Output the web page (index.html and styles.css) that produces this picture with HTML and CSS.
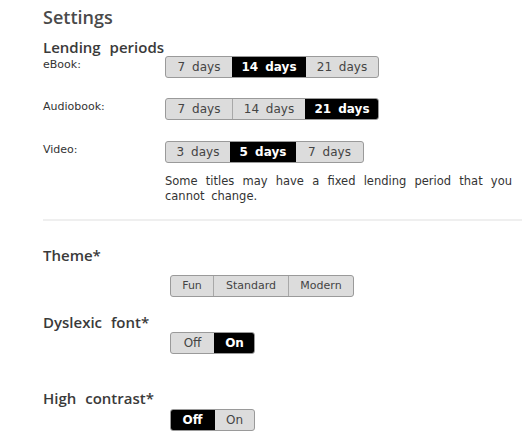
FILE: index.html
```html
<!DOCTYPE html>
<html>
<head>
<meta charset="utf-8">
<link rel="stylesheet" href="styles.css">
</head>
<body>
<div class="page">
  <h1 class="title">Settings</h1>
  <h2 class="section">Lending periods</h2>
  <div class="row row-first">
    <div class="label">eBook:</div>
    <div class="seg">
      <span class="opt w66">7 days</span><span class="opt on w73">14 days</span><span class="opt w73">21 days</span>
    </div>
  </div>
  <div class="row">
    <div class="label">Audiobook:</div>
    <div class="seg">
      <span class="opt w66">7 days</span><span class="opt w73">14 days</span><span class="opt on w73">21 days</span>
    </div>
  </div>
  <div class="row row-video">
    <div class="label">Video:</div>
    <div class="col">
      <div class="seg">
        <span class="opt w64">3 days</span><span class="opt on w65">5 days</span><span class="opt w69">7 days</span>
      </div>
      <p class="note">Some titles may have a fixed lending period that you cannot change.</p>
    </div>
  </div>
  <hr class="divider">
  <h2 class="section s-theme">Theme*</h2>
  <div class="seg seg-b">
    <span class="opt light w42">Fun</span><span class="opt light w75">Standard</span><span class="opt light w65">Modern</span>
  </div>
  <h2 class="section s-dys">Dyslexic font*</h2>
  <div class="seg seg-b">
    <span class="opt w44">Off</span><span class="opt on w40">On</span>
  </div>
  <h2 class="section s-hc">High contrast*</h2>
  <div class="seg seg-b">
    <span class="opt on w44">Off</span><span class="opt w40">On</span>
  </div>
</div>
</body>
</html>
```
FILE: styles.css
```css
html, body {
  margin: 0;
  padding: 0;
  background: #fff;
}
body {
  font-family: "DejaVu Sans", "Open Sans", sans-serif;
  color: #333;
}
.page {
  padding: 6px 7px 0 43px;
}
.title {
  margin: 0;
  font-family: "Open Sans", "DejaVu Sans", sans-serif;
  font-size: 18px;
  font-weight: 600;
  color: #4a4a4a;
  line-height: 22px;
}
.section {
  margin: 0;
  font-family: "Open Sans", "DejaVu Sans", sans-serif;
  font-size: 15px;
  font-weight: 600;
  color: #3a3a3a;
  line-height: 20px;
  word-spacing: 5px;
}
.title + .section {
  margin-top: 9px;
}
.row {
  display: grid;
  grid-template-columns: 122px auto;
  margin-top: 20px;
}
.row-first {
  margin-top: -1px;
}
.row-video {
  margin-top: 21px;
}
.label {
  font-size: 11px;
  color: #333;
  line-height: 14px;
  padding-top: 2px;
}
.col {
  display: flex;
  flex-direction: column;
}
.seg {
  display: flex;
  width: max-content;
  border: 1px solid #9a9a9a;
  border-radius: 3px;
  overflow: hidden;
  background: #dcdcdc;
}
.opt {
  display: block;
  height: 20px;
  line-height: 20px;
  text-align: center;
  font-size: 12px;
  color: #444;
  word-spacing: 3px;
  border-left: 1px solid #a8a8a8;
  box-sizing: border-box;
}
.opt:first-child {
  border-left: none;
}
.opt.on {
  background: #000;
  color: #fff;
  font-weight: 600;
  border-left-color: #000;
}
.opt.on + .opt {
  border-left-color: #000;
}
.opt.light {
  font-size: 11px;
}
.w40 { width: 40px; }
.w42 { width: 42px; }
.w44 { width: 43px; }
.w64 { width: 64px; }
.w65 { width: 65px; }
.w66 { width: 66px; }
.w69 { width: 68px; }
.w73 { width: 73px; }
.w75 { width: 75px; }
.note {
  margin: 11px 0 0;
  width: 347px;
  font-size: 11.5px;
  line-height: 15px;
  text-align: justify;
  word-spacing: 3px;
  color: #333;
}
.divider {
  margin: 15px 0 0;
  border: none;
  border-top: 2px solid #efefef;
}
.s-theme {
  margin-top: 24px;
}
.seg-b {
  margin-left: 127px;
  margin-top: 10px;
}
.s-dys {
  margin-top: 15px;
}
.s-hc {
  margin-top: 34px;
}
.s-hc + .seg-b {
  margin-top: 1px;
}
.s-dys + .seg-b {
  margin-top: 0px;
}
```
